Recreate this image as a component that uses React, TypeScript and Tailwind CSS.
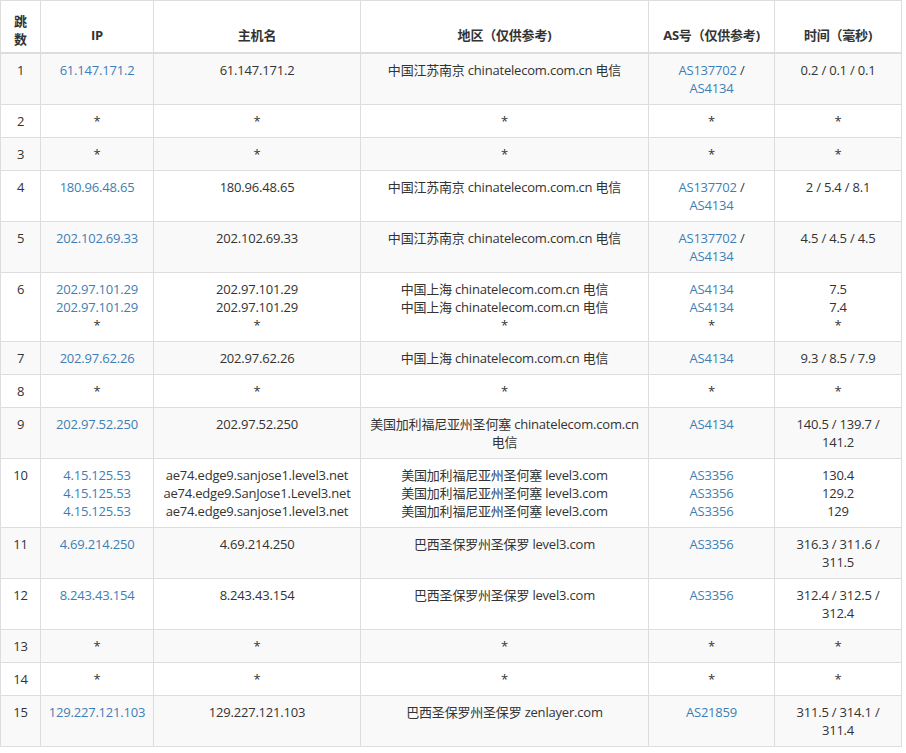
type Row = { n: number; ip: string[]; host: string[]; area: string[]; as: string[][]; time: string[] }

const s = ['*']
const rows: Row[] = [
  { n: 1, ip: ['61.147.171.2'], host: ['61.147.171.2'], area: ['中国江苏南京 chinatelecom.com.cn 电信'], as: [['AS137702', 'AS4134']], time: ['0.2 / 0.1 / 0.1'] },
  { n: 2, ip: s, host: s, area: s, as: [], time: s },
  { n: 3, ip: s, host: s, area: s, as: [], time: s },
  { n: 4, ip: ['180.96.48.65'], host: ['180.96.48.65'], area: ['中国江苏南京 chinatelecom.com.cn 电信'], as: [['AS137702', 'AS4134']], time: ['2 / 5.4 / 8.1'] },
  { n: 5, ip: ['202.102.69.33'], host: ['202.102.69.33'], area: ['中国江苏南京 chinatelecom.com.cn 电信'], as: [['AS137702', 'AS4134']], time: ['4.5 / 4.5 / 4.5'] },
  { n: 6, ip: ['202.97.101.29', '202.97.101.29', '*'], host: ['202.97.101.29', '202.97.101.29', '*'], area: ['中国上海 chinatelecom.com.cn 电信', '中国上海 chinatelecom.com.cn 电信', '*'], as: [['AS4134'], ['AS4134'], ['*']], time: ['7.5', '7.4', '*'] },
  { n: 7, ip: ['202.97.62.26'], host: ['202.97.62.26'], area: ['中国上海 chinatelecom.com.cn 电信'], as: [['AS4134']], time: ['9.3 / 8.5 / 7.9'] },
  { n: 8, ip: s, host: s, area: s, as: [], time: s },
  { n: 9, ip: ['202.97.52.250'], host: ['202.97.52.250'], area: ['美国加利福尼亚州圣何塞 chinatelecom.com.cn', '电信'], as: [['AS4134']], time: ['140.5 / 139.7 /', '141.2'] },
  { n: 10, ip: ['4.15.125.53', '4.15.125.53', '4.15.125.53'], host: ['ae74.edge9.sanjose1.level3.net', 'ae74.edge9.SanJose1.Level3.net', 'ae74.edge9.sanjose1.level3.net'], area: ['美国加利福尼亚州圣何塞 level3.com', '美国加利福尼亚州圣何塞 level3.com', '美国加利福尼亚州圣何塞 level3.com'], as: [['AS3356'], ['AS3356'], ['AS3356']], time: ['130.4', '129.2', '129'] },
  { n: 11, ip: ['4.69.214.250'], host: ['4.69.214.250'], area: ['巴西圣保罗州圣保罗 level3.com'], as: [['AS3356']], time: ['316.3 / 311.6 /', '311.5'] },
  { n: 12, ip: ['8.243.43.154'], host: ['8.243.43.154'], area: ['巴西圣保罗州圣保罗 level3.com'], as: [['AS3356']], time: ['312.4 / 312.5 /', '312.4'] },
  { n: 13, ip: s, host: s, area: s, as: [], time: s },
  { n: 14, ip: s, host: s, area: s, as: [], time: s },
  { n: 15, ip: ['129.227.121.103'], host: ['129.227.121.103'], area: ['巴西圣保罗州圣保罗 zenlayer.com'], as: [['AS21859']], time: ['311.5 / 314.1 /', '311.4'] },
]

const td = 'border border-[#ddd] px-1 py-[7px] align-top text-center whitespace-nowrap'
const link = 'text-[#3d7fb5]'

export default function App() {
  return (
    <div className="bg-white p-0" style={{ fontFamily: '"Open Sans", "Noto Sans CJK SC", sans-serif' }}>
      <table className="w-[901px] table-fixed border-collapse text-[13px] leading-[18px] tracking-[-0.2px] text-[#333]">
        <colgroup>
          <col className="w-[40px]" />
          <col className="w-[113px]" />
          <col className="w-[207px]" />
          <col className="w-[288px]" />
          <col className="w-[126px]" />
          <col className="w-[127px]" />
        </colgroup>
        <thead>
          <tr className="h-[52px] font-bold">
            <th className="border border-b-2 border-[#ddd] px-1 py-1 align-bottom text-center">跳<br />数</th>
            <th className="border border-b-2 border-[#ddd] px-2 py-2 align-bottom">IP</th>
            <th className="border border-b-2 border-[#ddd] px-2 py-2 align-bottom">主机名</th>
            <th className="border border-b-2 border-[#ddd] px-2 py-2 align-bottom">地区（仅供参考)</th>
            <th className="border border-b-2 border-[#ddd] px-2 py-2 align-bottom">AS号（仅供参考)</th>
            <th className="border border-b-2 border-[#ddd] px-2 py-2 align-bottom">时间（毫秒)</th>
          </tr>
        </thead>
        <tbody>
          {rows.map((r) => (
            <tr key={r.n} className={r.n % 2 ? 'bg-[#f9f9f9]' : 'bg-white'}>
              <td className="border border-[#ddd] px-1 py-[7px] align-top text-center">{r.n}</td>
              <td className={td}>
                {r.ip.map((x, i) => (
                  <div key={i} className={x === '*' ? '' : link}>{x}</div>
                ))}
              </td>
              <td className={td}>
                {r.host.map((x, i) => <div key={i}>{x}</div>)}
              </td>
              <td className={td}>
                {r.area.map((x, i) => <div key={i}>{x}</div>)}
              </td>
              <td className={td}>
                {r.as.length === 0 ? '*' : r.as.map((g, i) => (
                  <div key={i}>
                    {g.map((a, j) =>
                      a === '*' ? <span key={j}>*</span> : (
                        <div key={j}>
                          <span className={link}>{a}</span>
                          {j < g.length - 1 ? ' /' : ''}
                        </div>
                      ),
                    )}
                  </div>
                ))}
              </td>
              <td className={td}>
                {r.time.map((x, i) => <div key={i}>{x}</div>)}
              </td>
            </tr>
          ))}
        </tbody>
      </table>
    </div>
  )
}
